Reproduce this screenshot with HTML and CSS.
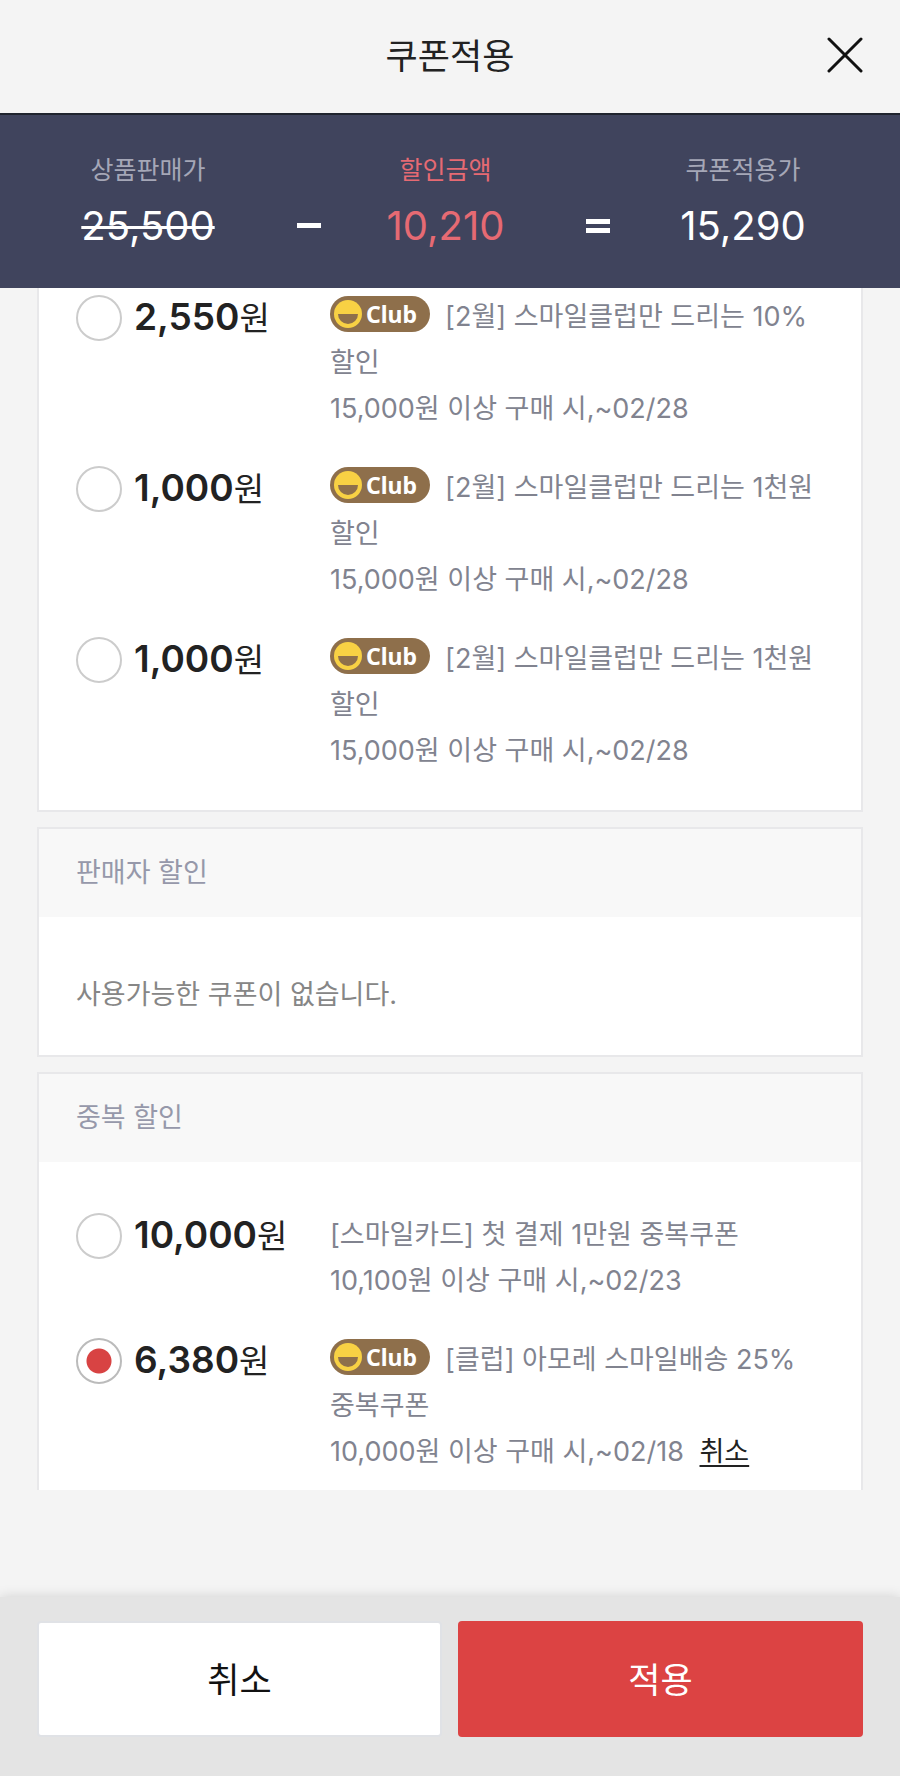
FILE: index.html
```html
<!DOCTYPE html>
<html lang="ko">
<head>
    <meta charset="UTF-8">
    <meta name="viewport" content="width=device-width, initial-scale=1.0">
    <title>쿠폰적용</title>
    <link rel="stylesheet" href="styles.css">
</head>
<body>
    <svg width="0" height="0" class="sprite" aria-hidden="true">
        <symbol id="smile" viewBox="0 0 28 28">
            <circle cx="14" cy="14" r="14" fill="#f8d144"/>
            <path d="M4 14h20a10 10 0 0 1-20 0z" fill="#8e6f4b"/>
        </symbol>
    </svg>

    <header class="header">
        <h1>쿠폰적용</h1>
        <button type="button" class="close" aria-label="닫기">
            <svg width="36" height="36" viewBox="0 0 36 36" fill="none" stroke="#111" stroke-width="3" stroke-linecap="round">
                <path d="M2 2l32 32M34 2L2 34"/>
            </svg>
        </button>
    </header>

    <section class="summary">
        <div class="price">
            <span class="price-label">상품판매가</span>
            <del class="price-value">25,500</del>
        </div>
        <span class="operator minus" role="img" aria-label="빼기"></span>
        <div class="price discount">
            <span class="price-label">할인금액</span>
            <span class="price-value">10,210</span>
        </div>
        <span class="operator equals" role="img" aria-label="결과"></span>
        <div class="price">
            <span class="price-label">쿠폰적용가</span>
            <span class="price-value">15,290</span>
        </div>
    </section>

    <main class="content">
        <section class="card card-scrolled">
            <ul class="coupons">
                <li class="coupon">
                    <label class="amount"><input type="radio" name="smile"><span><b>2,550</b>원</span></label>
                    <div class="desc">
                        <p><span class="club"><svg><use href="#smile"/></svg>Club</span>[2월] 스마일클럽만 드리는 10% 할인</p>
                        <p>15,000원 이상 구매 시,~02/28</p>
                    </div>
                </li>
                <li class="coupon">
                    <label class="amount"><input type="radio" name="smile"><span><b>1,000</b>원</span></label>
                    <div class="desc">
                        <p><span class="club"><svg><use href="#smile"/></svg>Club</span>[2월] 스마일클럽만 드리는 1천원 할인</p>
                        <p>15,000원 이상 구매 시,~02/28</p>
                    </div>
                </li>
                <li class="coupon">
                    <label class="amount"><input type="radio" name="smile"><span><b>1,000</b>원</span></label>
                    <div class="desc">
                        <p><span class="club"><svg><use href="#smile"/></svg>Club</span>[2월] 스마일클럽만 드리는 1천원 할인</p>
                        <p>15,000원 이상 구매 시,~02/28</p>
                    </div>
                </li>
            </ul>
        </section>

        <section class="card">
            <h2>판매자 할인</h2>
            <p class="empty">사용가능한 쿠폰이 없습니다.</p>
        </section>

        <section class="card card-cut">
            <h2>중복 할인</h2>
            <ul class="coupons">
                <li class="coupon">
                    <label class="amount"><input type="radio" name="extra"><span><b>10,000</b>원</span></label>
                    <div class="desc">
                        <p>[스마일카드] 첫 결제 1만원 중복쿠폰</p>
                        <p>10,100원 이상 구매 시,~02/23</p>
                    </div>
                </li>
                <li class="coupon">
                    <label class="amount"><input type="radio" name="extra" checked><span><b>6,380</b>원</span></label>
                    <div class="desc">
                        <p><span class="club"><svg><use href="#smile"/></svg>Club</span>[클럽] 아모레 스마일배송 25% 중복쿠폰</p>
                        <p>10,000원 이상 구매 시,~02/18 <a href="#">취소</a></p>
                    </div>
                </li>
            </ul>
        </section>
    </main>

    <footer class="actions">
        <button type="button" class="btn btn-cancel">취소</button>
        <button type="button" class="btn btn-apply">적용</button>
    </footer>
</body>
</html>
```

FILE: styles.css
```css
* {
    box-sizing: border-box;
    margin: 0;
    padding: 0;
}
body {
    display: flex;
    flex-direction: column;
    min-height: 100vh;
    background: #f4f4f4;
    color: #222;
    font-family: Inter, "Noto Sans CJK KR", sans-serif;
    font-size: 27px;
    line-height: 46px;
    word-break: keep-all;
}
button {
    border: none;
    font-family: inherit;
    cursor: pointer;
}
ul {
    list-style: none;
}
.sprite {
    position: absolute;
}

/* header */
.header {
    position: relative;
    padding: 32px 0;
    border-bottom: 2px solid #20242e;
    text-align: center;
}
.header h1 {
    font-size: 35px;
    font-weight: 400;
    line-height: 49px;
}
.close {
    position: absolute;
    top: 37px;
    right: 37px;
    height: 36px;
    background: none;
}
.close svg {
    display: block;
}

/* price summary */
.summary {
    display: grid;
    grid-template-columns: 260fr 61fr 213fr 92fr 198fr;
    padding: 35px 58px 26px 18px;
    background: #40445d;
    color: #fff;
}
.price {
    display: flex;
    flex-direction: column;
    align-items: center;
}
.price-label {
    color: #a5a7b7;
    font-size: 25px;
    line-height: 40px;
}
.price-value {
    font-size: 40px;
    line-height: 72px;
}
del.price-value {
    text-decoration-thickness: 3px;
}
.discount,
.discount .price-label {
    color: #e66a73;
}
.operator {
    align-self: end;
    justify-self: center;
    width: 24px;
    height: 14px;
    margin-bottom: 29px;
}
.minus {
    height: 5px;
    margin-bottom: 34px;
    background: #fff;
}
.equals {
    border: solid #fff;
    border-width: 5px 0;
}

/* coupon cards */
.content {
    flex: 1;
    padding: 0 37px;
}
.card {
    margin-bottom: 15px;
    border: 2px solid #e8e8ea;
    background: #fff;
}
.card h2 {
    padding: 21px 37px;
    background: #f8f8f8;
    color: #9698aa;
    font-size: 27px;
    font-weight: 400;
}
.empty {
    padding: 55px 37px 37px;
    color: #868686;
}
.coupons {
    display: flex;
    flex-direction: column;
    gap: 31px;
    padding: 48px 37px 36px;
}
.card-scrolled {
    border-top: none;
}
.card-scrolled .coupons {
    padding-top: 4px;
}
.card-cut {
    border-bottom: none;
}
.card-cut .coupons {
    padding-bottom: 15px;
}
.coupon {
    display: grid;
    grid-template-columns: 254px 1fr;
    align-items: start;
}
.amount {
    display: flex;
    align-items: center;
    gap: 12px;
    padding-top: 2px;
    font-size: 33px;
}
.amount b {
    font-size: 37px;
    font-weight: 600;
}
.amount input {
    appearance: none;
    width: 46px;
    height: 46px;
    border: 2px solid #ccc;
    border-radius: 50%;
    background: #fff;
}
.amount input:checked {
    border-color: #bbb;
    background: radial-gradient(circle, #d84343 12px, #fff 13px);
}
.desc {
    padding-top: 2px;
    color: #81838f;
}
.desc a {
    margin-left: 8px;
    color: #222;
    text-underline-offset: 4px;
}
.club {
    display: inline-flex;
    align-items: center;
    gap: 4px;
    height: 36px;
    margin-right: 15px;
    padding: 0 13px 0 4px;
    border-radius: 18px;
    background: #8e6f4b;
    color: #fff;
    font-family: "Noto Sans", sans-serif;
    font-size: 23px;
    font-weight: 700;
    line-height: 36px;
    vertical-align: -2px;
}
.club svg {
    width: 28px;
    height: 28px;
}

/* bottom buttons */
.actions {
    display: grid;
    grid-template-columns: 1fr 1fr;
    gap: 16px;
    padding: 24px 37px 39px;
    background: #e4e4e4;
    box-shadow: 0 0 12px rgba(0, 0, 0, 0.15);
}
.btn {
    height: 116px;
    padding-bottom: 4px;
    border-radius: 4px;
    font-size: 35px;
}
.btn-cancel {
    border: 2px solid #e0e2e6;
    background: #fff;
    color: #111;
}
.btn-apply {
    background: #dc4343;
    color: #fff;
}
```
